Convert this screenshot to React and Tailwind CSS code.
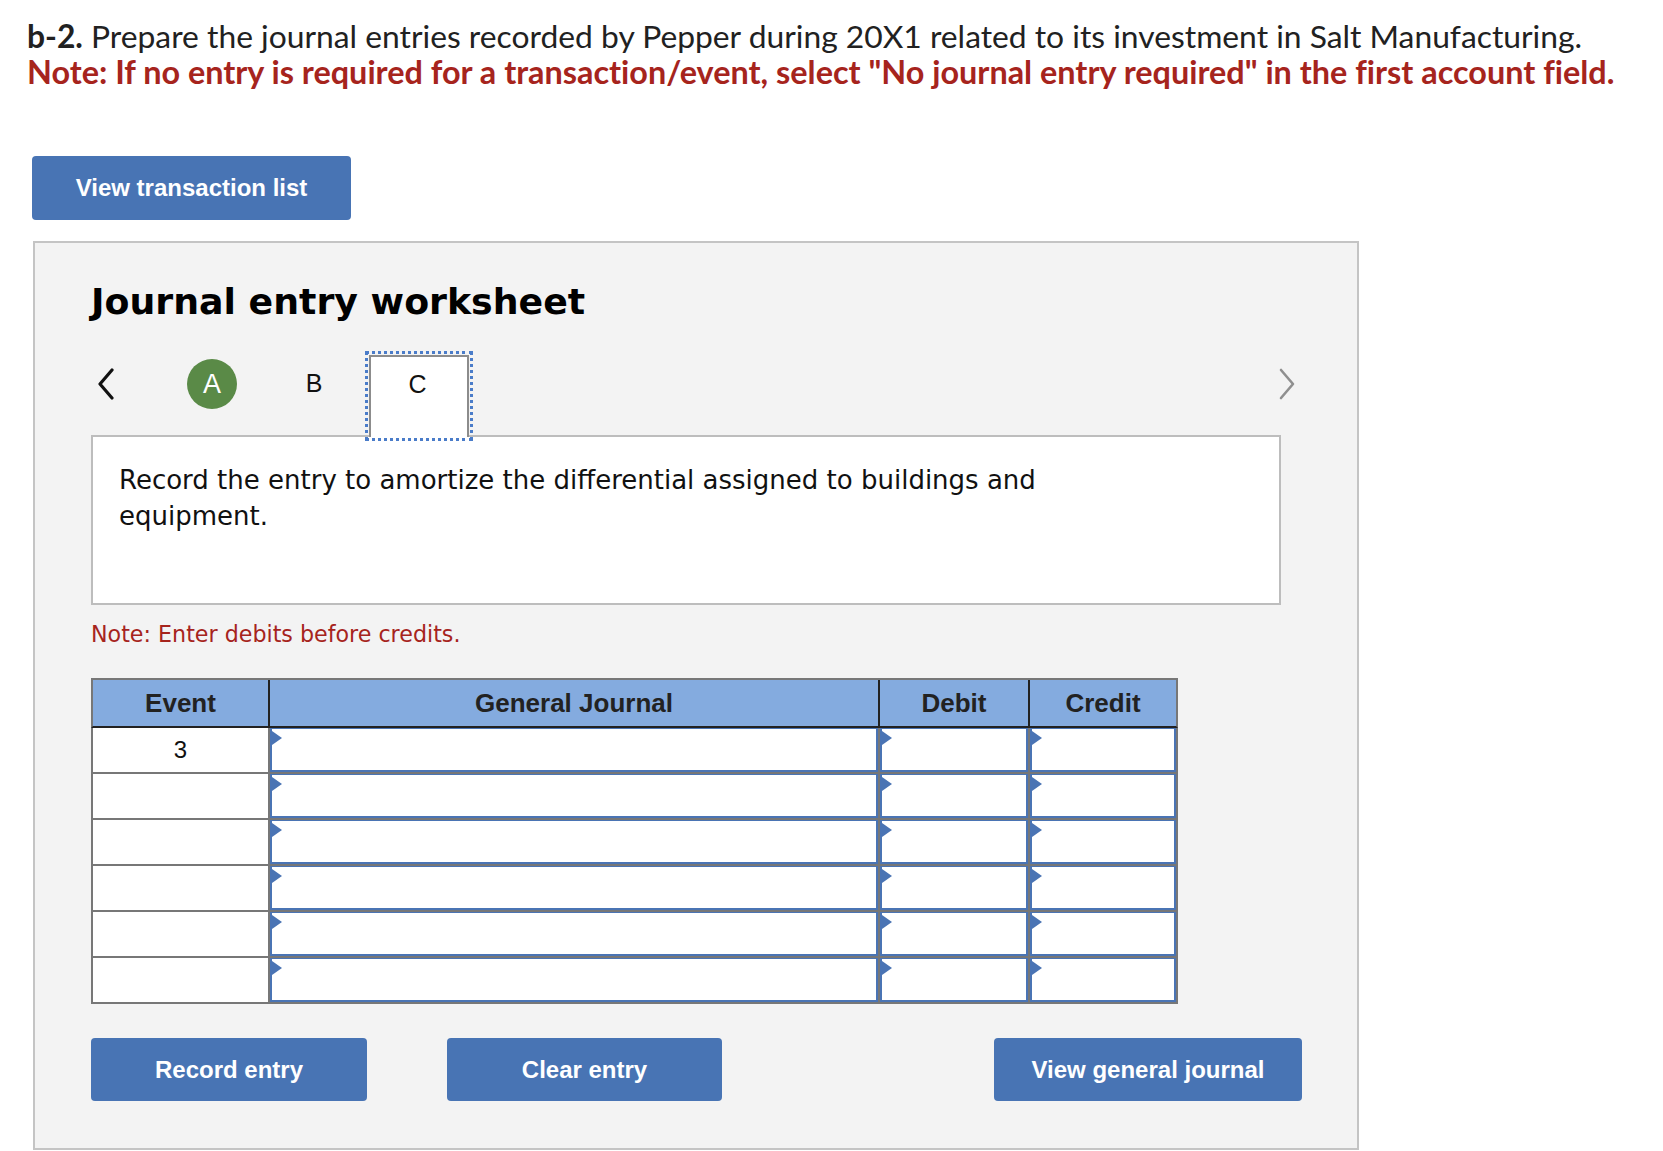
import { useState } from 'react';

// journal entry worksheet (event C)

const rows = ['3', '', '', '', '', ''];

const Arrow = () => (
  <span className="absolute left-0 top-[2px] w-0 h-0 border-t-[7px] border-b-[7px] border-l-[10px] border-t-transparent border-b-transparent border-l-[#4a74b4]" />
);

const InputCell = ({ width }) => (
  <div className={`${width} h-full border-l-2 border-[#777] shrink-0`}>
    <div className="relative h-full bg-white border-2 border-t-[1px] border-[#4a74b4]">
      <Arrow />
    </div>
  </div>
);

const Button = ({ label, className }) => (
  <button className={`h-[63px] rounded-[4px] bg-[#4874b4] text-white font-bold text-[24px] font-['Liberation_Sans',Arial,sans-serif] shrink-0 ${className}`}>
    {label}
  </button>
);

export default function App() {
  const [tab, setTab] = useState('C');

  return (
    <div className="w-[1663px] h-[1151px] bg-white overflow-hidden">
      <div className="pl-[27px] pt-[18px] font-['Lato',sans-serif] leading-[36px] [font-variant-ligatures:none]">
        <p className="text-[31.8px] text-[#212121]">
          <span className="font-bold">b-2.</span> Prepare the journal entries recorded by Pepper during 20X1 related to its investment in Salt Manufacturing.
        </p>
        <p className="text-[32.4px] font-bold text-[#a6241d]">
          Note: If no entry is required for a transaction/event, select "No journal entry required" in the first account field.
        </p>
      </div>

      <Button label="View transaction list" className="ml-[32px] mt-[66px] w-[319px] h-[64px]" />

      <div className="ml-[33px] mt-[21px] w-[1326px] border-2 border-[#c4c4c4] bg-[#f3f3f3] pl-[56px] pt-[39px] pb-[47px]">
        <h2 className="font-['DejaVu_Sans',sans-serif] font-bold text-[36.3px] leading-[40px] text-black">
          Journal entry worksheet
        </h2>

        <div className="flex items-start mt-[33px] w-[1190px] font-['Liberation_Sans',Arial,sans-serif] text-[25px]">
          <div className="w-[30px] h-[58px] flex items-center justify-center">
            <svg width="18" height="32" viewBox="0 0 18 32">
              <path d="M15 2 L3 16 L15 30" fill="none" stroke="#111" strokeWidth="3.2" strokeLinecap="round" strokeLinejoin="round" />
            </svg>
          </div>
          <div className="ml-[66px] h-[58px] flex items-center">
            <div className="w-[50px] h-[50px] rounded-full bg-[#5a8a47] text-white text-[27px] flex items-center justify-center">A</div>
          </div>
          <div className="ml-[53px] w-[48px] h-[58px] flex items-center justify-center text-[#111]">B</div>
          <div
            onClick={() => setTab('C')}
            className="relative z-10 ml-[31px] w-[100px] h-[82px] bg-white border-2 border-b-0 border-[#8c8c8c] outline-[3px] outline-dotted outline-[#4a7cc9] outline-offset-[1px]"
          >
            <div className="h-[56px] flex items-center justify-center pr-[3px] text-[#111]">{tab}</div>
          </div>
          <div className="ml-auto -mr-[21px] w-[30px] h-[58px] flex items-center justify-center">
            <svg width="18" height="32" viewBox="0 0 18 32">
              <path d="M3 2 L15 16 L3 30" fill="none" stroke="#8f8f8f" strokeWidth="2.6" strokeLinecap="round" strokeLinejoin="round" />
            </svg>
          </div>
        </div>

        <div className="-mt-[2px] w-[1190px] h-[170px] bg-white border-2 border-[#bdbdbd] pl-[26px] pt-[25px] font-['DejaVu_Sans',sans-serif] text-[26px] leading-[36px] text-[#111]">
          Record the entry to amortize the differential assigned to buildings and
          <br />
          equipment.
        </div>

        <p className="mt-[15px] font-['DejaVu_Sans',sans-serif] text-[22.2px] leading-[28px] text-[#a6241d]">
          Note: Enter debits before credits.
        </p>

        <div className="mt-[30px] w-[1087px] font-['Liberation_Sans',Arial,sans-serif]">
          <div className="flex h-[50px] bg-[#84abdf] border-2 border-[#777] border-b-[#222] text-[26px] font-bold text-[#222]">
            <div className="w-[175px] flex items-center justify-center">Event</div>
            <div className="w-[610px] border-l-2 border-[#222] flex items-center justify-center">General Journal</div>
            <div className="w-[150px] border-l-2 border-[#222] flex items-center justify-center">Debit</div>
            <div className="w-[148px] border-l-2 border-[#222] flex items-center justify-center">Credit</div>
          </div>
          {rows.map((ev, i) => (
            <div key={i} className="flex h-[46px] border-x-2 border-b-2 border-[#777] bg-[#777]">
              <div className="w-[175px] shrink-0 bg-white flex items-center justify-center text-[24px] text-[#111]">{ev}</div>
              <InputCell width="w-[610px]" />
              <InputCell width="w-[150px]" />
              <InputCell width="w-[148px]" />
            </div>
          ))}
        </div>

        <div className="flex mt-[34px]">
          <Button label="Record entry" className="w-[276px]" />
          <Button label="Clear entry" className="ml-[80px] w-[275px]" />
          <Button label="View general journal" className="ml-[272px] w-[308px]" />
        </div>
      </div>
    </div>
  );
}
